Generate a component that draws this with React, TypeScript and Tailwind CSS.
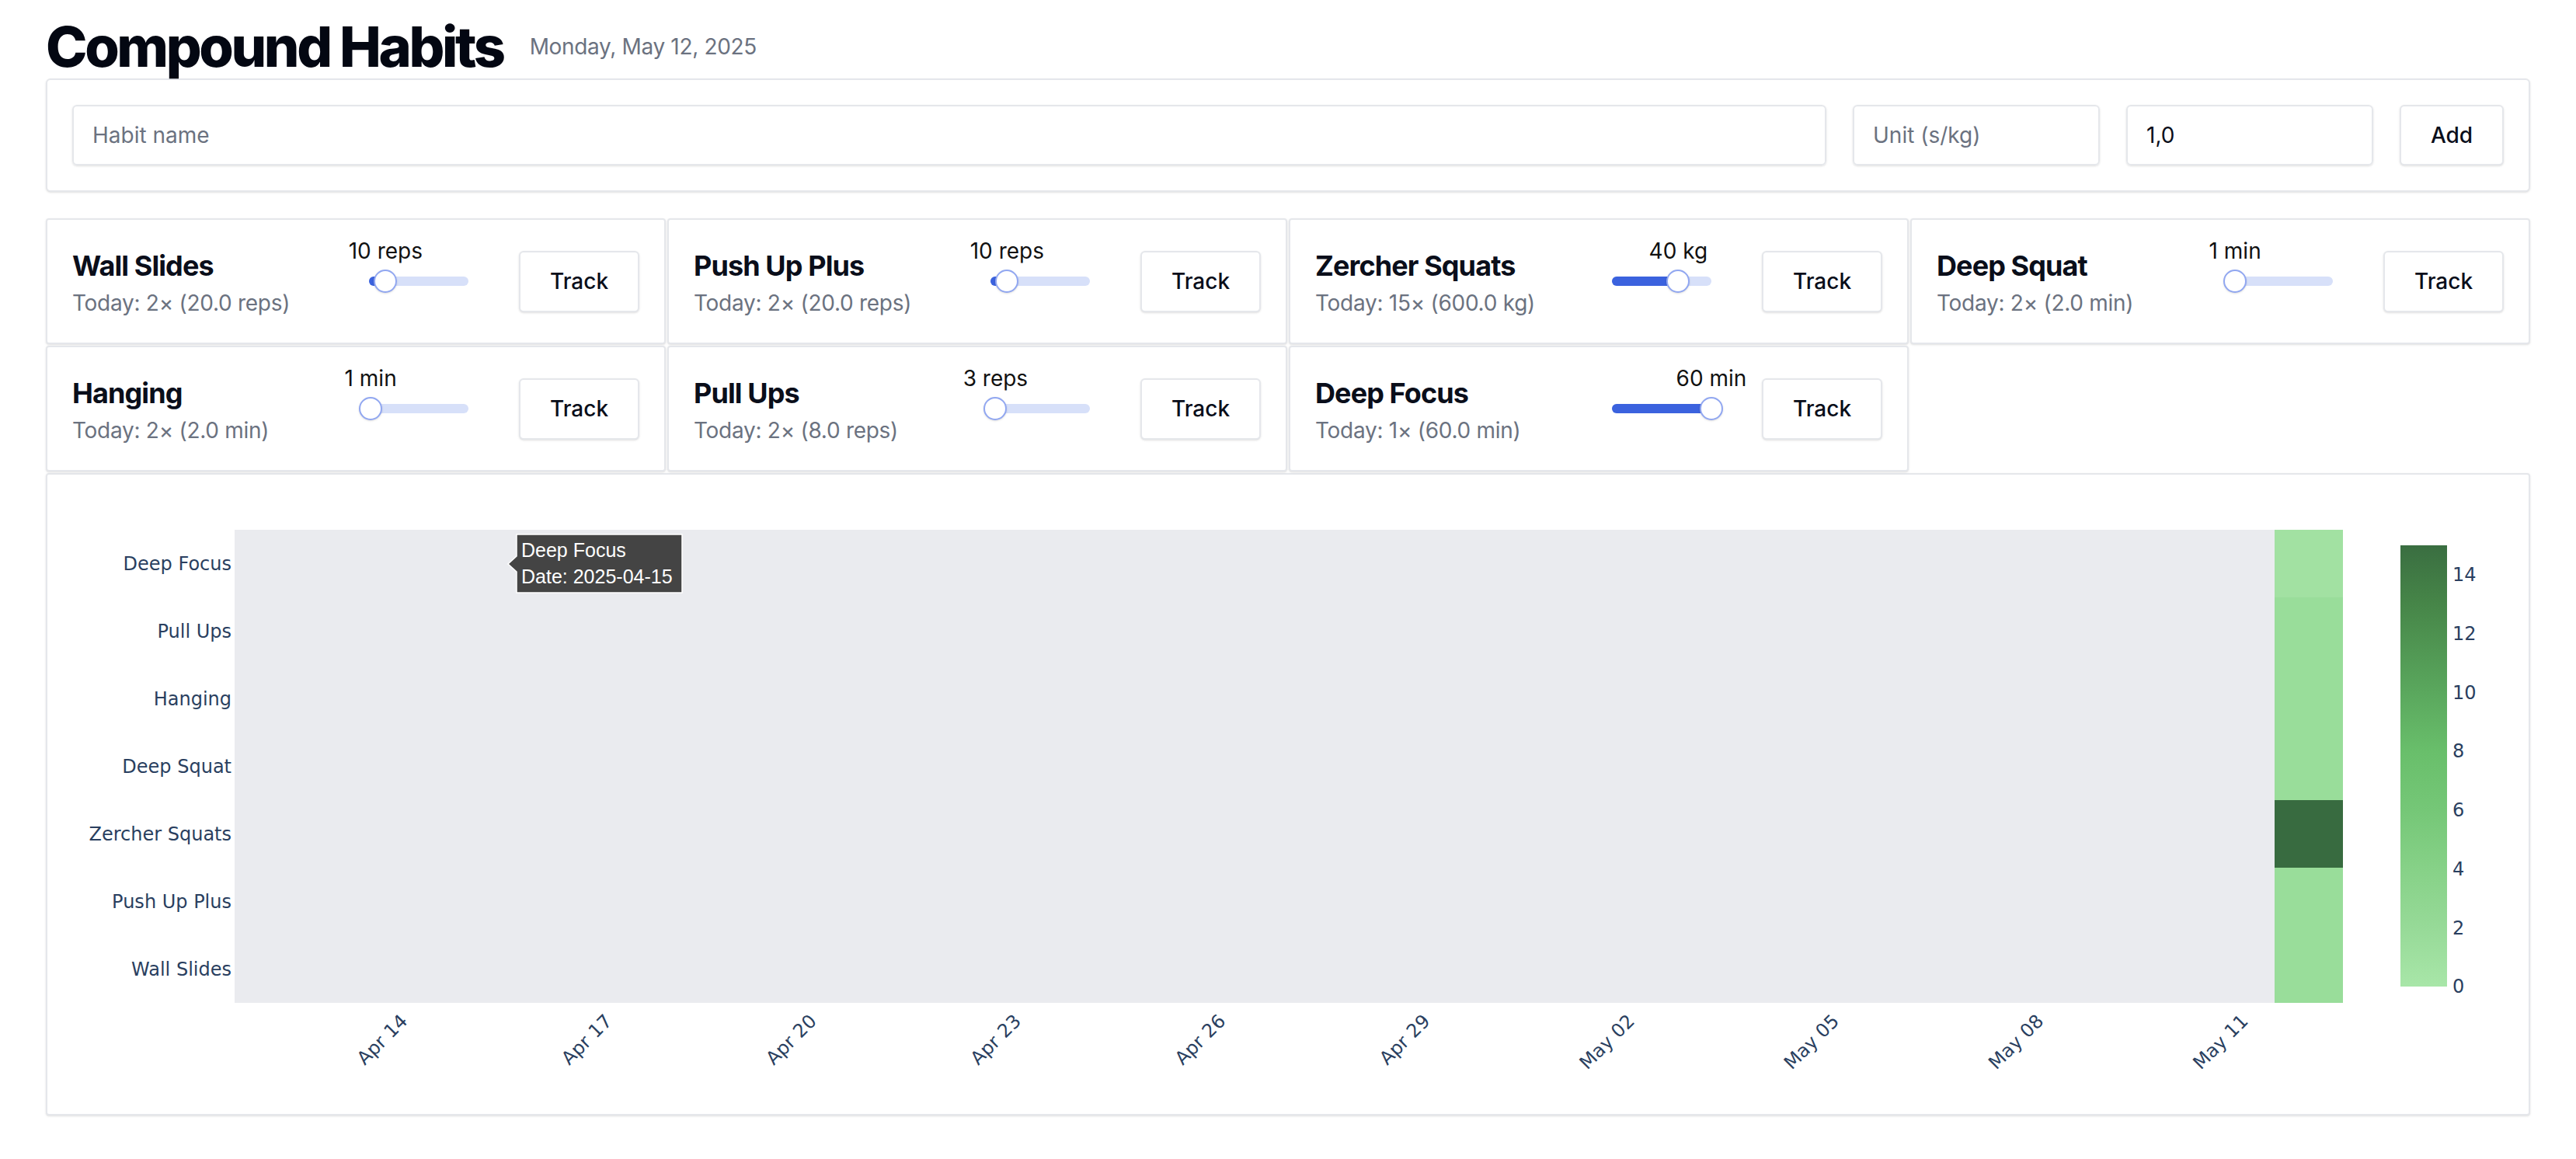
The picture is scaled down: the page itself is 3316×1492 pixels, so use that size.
import React from "react"

interface Habit {
  name: string
  amount: number
  unit: string
  today: string
}

const habits: Habit[] = [
  { name: "Wall Slides", amount: 10, unit: "reps", today: "Today: 2× (20.0 reps)" },
  { name: "Push Up Plus", amount: 10, unit: "reps", today: "Today: 2× (20.0 reps)" },
  { name: "Zercher Squats", amount: 40, unit: "kg", today: "Today: 15× (600.0 kg)" },
  { name: "Deep Squat", amount: 1, unit: "min", today: "Today: 2× (2.0 min)" },
  { name: "Hanging", amount: 1, unit: "min", today: "Today: 2× (2.0 min)" },
  { name: "Pull Ups", amount: 3, unit: "reps", today: "Today: 2× (8.0 reps)" },
  { name: "Deep Focus", amount: 60, unit: "min", today: "Today: 1× (60.0 min)" },
]

// heatmap rows, top to bottom, with today's count
const rows = [
  { name: "Deep Focus", count: 1 },
  { name: "Pull Ups", count: 2 },
  { name: "Hanging", count: 2 },
  { name: "Deep Squat", count: 2 },
  { name: "Zercher Squats", count: 15 },
  { name: "Push Up Plus", count: 2 },
  { name: "Wall Slides", count: 2 },
]

const ticks = ["Apr 14", "Apr 17", "Apr 20", "Apr 23", "Apr 26", "Apr 29", "May 02", "May 05", "May 08", "May 11"]

const cellColor = (v: number) => {
  if (v >= 15) return "#386b40"
  if (v >= 2) return "#99dd9a"
  return "#a2e1a2"
}

const Slider = ({ value, unit }: { value: number; unit: string }) => {
  const pct = (value / 60) * 100
  return (
    <div className="relative h-[30px] w-[128px] shrink-0">
      <div className="absolute left-0 right-0 top-[9px] h-[12px] rounded-full bg-[#d7e0f9]" />
      <div className="absolute left-0 top-[9px] h-[12px] rounded-full bg-[#3b62de]" style={{ width: `${pct}%` }} />
      <div
        className="absolute top-0 h-[30px] w-[30px] -translate-x-1/2 rounded-full border-2 border-[#91a7f1] bg-white shadow-sm"
        style={{ left: `${pct}%` }}
      />
      <span
        className="absolute bottom-[34px] -translate-x-1/2 whitespace-nowrap text-[28px] leading-[40px] text-[#111111]"
        style={{ left: `${pct}%` }}
      >
        {value} {unit}
      </span>
    </div>
  )
}

const HabitCard = ({ habit }: { habit: Habit }) => {
  return (
    <div className="flex items-center rounded-[4px] border-2 border-[#e5e7eb] bg-white px-[32px] py-[31px] shadow-sm">
      <div className="min-w-0 flex-1">
        <h3 className="text-[36px] font-bold leading-[56px] tracking-[-0.025em] text-[#0a0e1a]">{habit.name}</h3>
        <p className="text-[28px] leading-[40px] tracking-[-0.01em] text-[#6b7280]">{habit.today}</p>
      </div>
      <Slider value={habit.amount} unit={habit.unit} />
      <button className="ml-[65px] h-[79px] w-[155px] shrink-0 rounded-[6px] border-2 border-[#e5e7eb] bg-white text-[28px] font-medium text-[#0a0e1a] shadow-sm">
        Track
      </button>
    </div>
  )
}

const Heatmap = () => {
  const plotLeft = 302
  const plotRight = 3016
  const plotTop = 682
  const rowH = 87
  const day = 87.75
  const colLeft = 2928
  const firstTick = 516
  const barTop = 702
  const barBottom = 1270
  const perUnit = (barBottom - barTop) / 15

  return (
    <svg className="block h-[823px] w-full" viewBox="61 611 3194 823" fontFamily="'DejaVu Sans', Verdana, sans-serif">
      <defs>
        <linearGradient id="greens" x1="0" y1="0" x2="0" y2="1">
          <stop offset="0" stopColor="#3a6e41" />
          <stop offset="0.13" stopColor="#468548" />
          <stop offset="0.33" stopColor="#5aa75d" />
          <stop offset="0.47" stopColor="#69bf6b" />
          <stop offset="0.6" stopColor="#75c777" />
          <stop offset="0.73" stopColor="#86d187" />
          <stop offset="0.87" stopColor="#97da98" />
          <stop offset="1" stopColor="#a8e6a8" />
        </linearGradient>
      </defs>

      <rect x={plotLeft} y={plotTop} width={plotRight - plotLeft} height={rowH * 7} fill="#eaebef" />
      {rows.map((r, i) => (
        <g key={r.name}>
          <rect x={colLeft} y={plotTop + i * rowH} width={plotRight - colLeft} height={rowH} fill={cellColor(r.count)} />
          <text x={298} y={plotTop + i * rowH + rowH / 2 + 8} textAnchor="end" fontSize="24" fill="#2a3f5f">
            {r.name}
          </text>
        </g>
      ))}

      {ticks.map((t, i) => {
        const x = firstTick + i * 3 * day
        return (
          <text
            key={t}
            transform={`translate(${x + 4} ${plotTop + rowH * 7 + 19}) rotate(-45)`}
            textAnchor="end"
            dy="0.35em"
            fontSize="24"
            fill="#2a3f5f"
          >
            {t}
          </text>
        )
      })}

      <rect x={3090} y={barTop} width={60} height={barBottom - barTop} fill="url(#greens)" />
      {[0, 2, 4, 6, 8, 10, 12, 14].map((v) => (
        <text key={v} x={3157} y={barBottom - v * perUnit} dy="0.35em" fontSize="24" fill="#2a3f5f">
          {v}
        </text>
      ))}

      {/* hover label */}
      <path d="M654 726 L665 716 L665 688 L878 688 L878 763 L665 763 L665 736 Z" fill="#444444" stroke="#ffffff" strokeWidth="1.5" />
      <text x={671} y={717} fontSize="25" fill="#ffffff" fontFamily="'Liberation Sans', Arial, sans-serif">
        Deep Focus
      </text>
      <text x={671} y={751} fontSize="25" fill="#ffffff" fontFamily="'Liberation Sans', Arial, sans-serif">
        Date: 2025-04-15
      </text>
    </svg>
  )
}

const App = () => {
  return (
    <div className="min-h-screen bg-white px-[59px] pt-[20px] font-['Inter',sans-serif]">
      <div className="flex items-center gap-[34px]">
        <h1 className="text-[72px] font-extrabold leading-[80px] tracking-[-0.047em] text-[#030712]">Compound Habits</h1>
        <span className="text-[28px] tracking-[-0.012em] text-[#6b7280]">Monday, May 12, 2025</span>
      </div>

      <div className="mt-[1px] flex gap-[34px] rounded-[6px] border-2 border-[#e5e7eb] bg-white p-[32px] shadow-sm">
        <input
          placeholder="Habit name"
          className="h-[78px] min-w-0 flex-1 rounded-[6px] border-2 border-[#e5e7eb] px-[24px] text-[28px] text-[#0a0e1a] shadow-sm outline-none placeholder:text-[#6b7280]"
        />
        <input
          placeholder="Unit (s/kg)"
          className="h-[78px] w-[318px] rounded-[6px] border-2 border-[#e5e7eb] px-[24px] text-[28px] text-[#0a0e1a] shadow-sm outline-none placeholder:text-[#6b7280]"
        />
        <input
          defaultValue="1,0"
          className="h-[78px] w-[318px] rounded-[6px] border-2 border-[#e5e7eb] px-[24px] text-[28px] text-[#0a0e1a] shadow-sm outline-none"
        />
        <button className="h-[78px] w-[134px] rounded-[6px] border-2 border-[#e5e7eb] bg-white text-[28px] font-medium text-[#0a0e1a] shadow-sm">
          Add
        </button>
      </div>

      <div className="mt-[34px] grid grid-cols-4 gap-[2px]">
        {habits.map((h) => (
          <HabitCard key={h.name} habit={h} />
        ))}
      </div>

      <div className="mt-[2px] rounded-[4px] border-2 border-[#e5e7eb] bg-white shadow-sm">
        <Heatmap />
      </div>
    </div>
  )
}

export default App
